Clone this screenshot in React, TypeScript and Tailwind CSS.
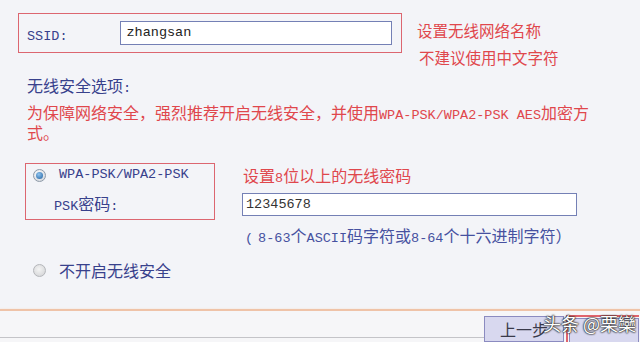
import type { ReactNode } from "react";

// half-width latin run, mimics the SimSun ascii glyphs of the router page
function A({ children }: { children: ReactNode }) {
  return <span className="font-['Liberation_Mono',monospace] text-[13.5px] leading-none">{children}</span>;
}

function Radio({ checked }: { checked?: boolean }) {
  if (checked) {
    return (
      <span className="grid h-[13px] w-[13px] shrink-0 place-items-center rounded-full border border-[#8e9aa8] bg-[radial-gradient(circle_at_40%_35%,#ffffff,#c9ced6)]">
        <span className="h-[7px] w-[7px] rounded-full bg-[radial-gradient(circle_at_40%_35%,#8fc4f0,#1f5f9e)]" />
      </span>
    );
  }
  return (
    <span className="h-[13px] w-[13px] shrink-0 rounded-full border border-[#b4b6ba] bg-[radial-gradient(circle_at_45%_40%,#f4f4f4,#cfd0d3)]" />
  );
}

export default function App() {
  return (
    <div className="relative flex h-[342px] w-[640px] flex-col overflow-hidden bg-[#f3f4f8] font-['Noto_Sans_CJK_SC',sans-serif] text-[16px]">
      {/* SSID */}
      <div className="flex h-[67px] shrink-0 items-start pl-[18px] pt-[13px]">
        <div className="flex h-[40px] w-[384px] items-center border-[1.5px] border-[#dc6670] pl-[8px]">
          <span className="w-[92.5px] text-[#38418c]">
            <A>SSID:</A>
          </span>
          <div className="flex h-[24px] w-[272px] items-center border border-[#7480b5] bg-white pl-[6px] text-[#222]">
            <A>zhangsan</A>
          </div>
        </div>
        <div className="ml-[15px] whitespace-nowrap text-[15.5px] text-[#e0474c]">
          <div className="mt-[7px] h-[20px] leading-[20px]">设置无线网络名称</div>
          <div className="mt-[7px] h-[20px] pl-[2px] leading-[20px]">不建议使用中文字符</div>
        </div>
      </div>

      {/* security options */}
      <div className="mt-[8px] h-[20px] shrink-0 pl-[27px] leading-[20px] text-[#38418c]">
        无线安全选项<A>:</A>
      </div>
      <div className="mt-[8px] h-[36px] shrink-0 whitespace-nowrap pl-[27px] leading-[18px] text-[#e0474c]">
        为保障网络安全，强烈推荐开启无线安全，并使用<A>WPA-PSK/WPA2-PSK AES</A>加密方
        <br />
        式。
      </div>

      {/* WPA */}
      <div className="mt-[24px] flex h-[82px] shrink-0 items-start pl-[25px]">
        <div className="h-[57px] w-[190px] border-[1.5px] border-[#dc6670] pt-[1px] text-[#38418c]">
          <div className="flex h-[20px] items-center gap-[13px] pl-[7px]">
            <Radio checked />
            <A>WPA-PSK/WPA2-PSK</A>
          </div>
          <div className="mt-[8px] h-[20px] pl-[28px] leading-[20px]">
            <A>PSK</A>密码<A>:</A>
          </div>
        </div>
        <div className="ml-[27px]">
          <div className="mt-[2px] h-[20px] pl-[1px] leading-[20px] text-[#e0474c]">
            设置<A>8</A>位以上的无线密码
          </div>
          <div className="mt-[8px] flex h-[23px] w-[335px] items-center border border-[#7480b5] bg-white pl-[3px] text-[#333]">
            <A>12345678</A>
          </div>
          <div className="mt-[9px] h-[20px] whitespace-nowrap pl-[3px] leading-[20px] text-[#4651a0]">
            <span className="mr-[5px]">
              <A>(</A>
            </span>
            <A>8-63</A>个<A>ASCII</A>码字符或<A>8-64</A>个十六进制字符）
          </div>
        </div>
      </div>

      {/* disable */}
      <div className="mt-[15px] flex h-[20px] shrink-0 items-center gap-[13px] pl-[33px] text-[#38418c]">
        <Radio />
        <span className="leading-[20px]">不开启无线安全</span>
      </div>

      <div className="mt-[29px] h-[2px] shrink-0 bg-[#efc3a8] shadow-[0_0_2px_#f6dccb]" />

      {/* bottom buttons */}
      <div className="flex shrink-0 items-start bg-[#f6f6f8]">
        <div className="h-[27px] flex-1 border-b border-[#c4c4c8]" />
        <div className="mt-[5px] flex h-[26px] w-[80px] items-center justify-center border border-[#8b8bc0] bg-[#d8d8ef] text-[16px] leading-[20px] text-[#3a3a4a]">
          上一步
        </div>
        <div className="ml-[2px] mt-[4px] flex h-[27px] border-l-2 border-t-2 border-[#e0646c] pl-[1px] pt-[1px]">
          <div className="h-[26px] w-[70px] border border-[#8b8bc0] bg-[#d8d8ef]" />
        </div>
        <div className="w-[1px]" />
      </div>

      {/* watermark */}
      <div className="absolute left-[543px] top-[311px] whitespace-nowrap text-[18px] leading-[24px] text-white [text-shadow:0_0_1px_#222,0_0_2px_#222,0_0_2px_#222]">
        头条 @栗欒
      </div>
    </div>
  );
}
